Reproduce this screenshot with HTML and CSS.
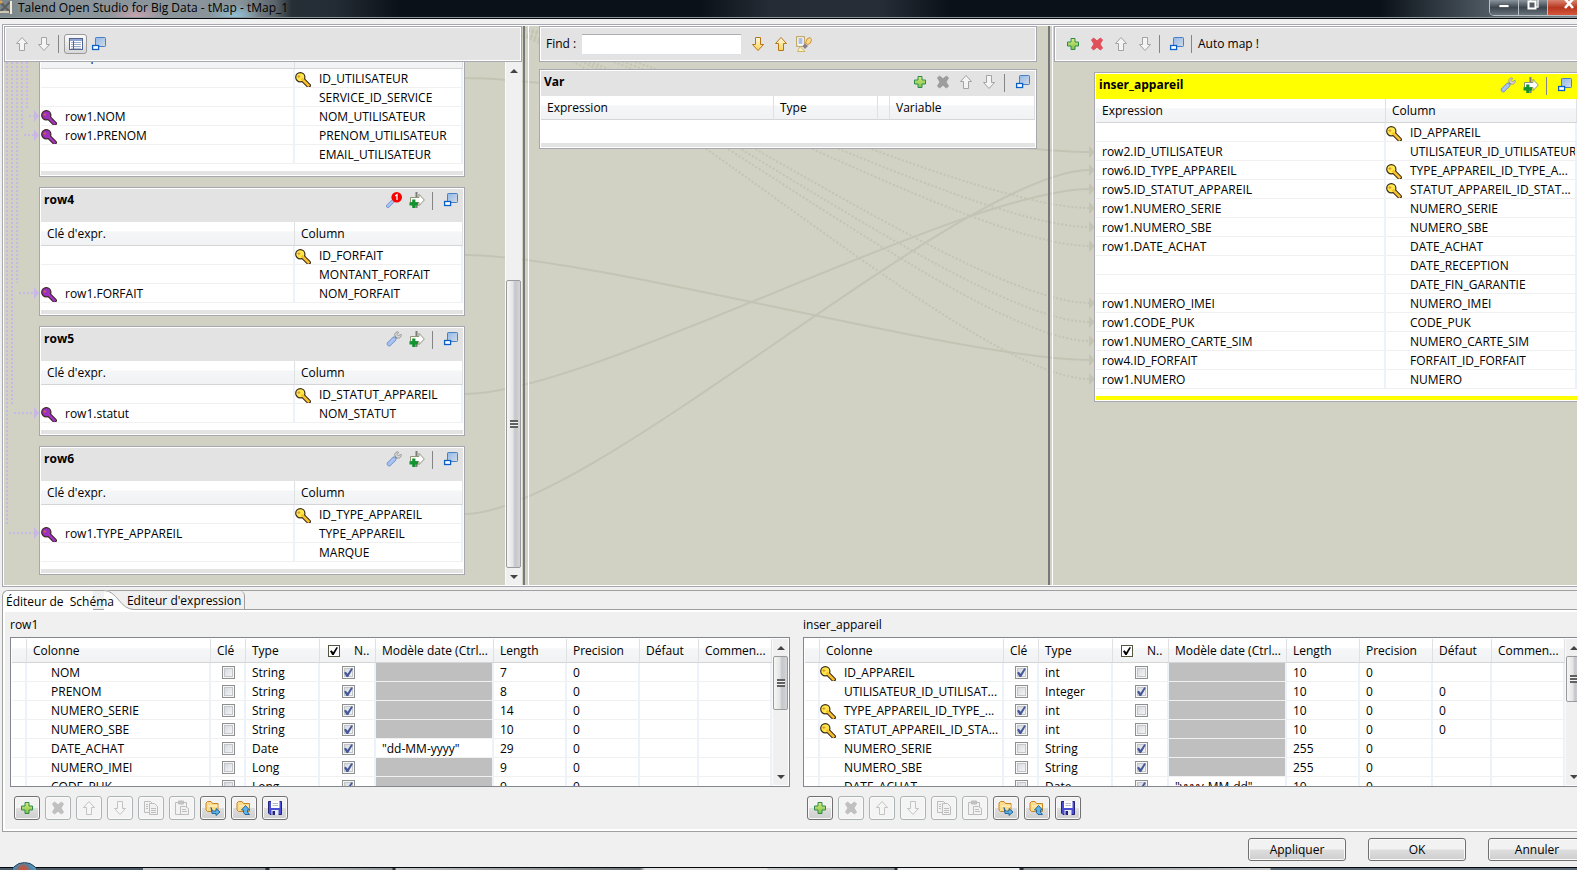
FILE: index.html
```html
<!DOCTYPE html>
<html lang="fr">
<head>
<meta charset="utf-8">
<title>Talend Open Studio for Big Data - tMap - tMap_1</title>
<link rel="stylesheet" href="styles.css">
</head>
<body>
<svg class="defs" aria-hidden="true">
  <defs>
    <linearGradient id="g-win" x1="0" y1="0" x2="1" y2="1"><stop offset="0" stop-color="#8fb8ea"/><stop offset="1" stop-color="#d4dbe4"/></linearGradient>
    <linearGradient id="g-plus" x1="0" y1="0" x2="0" y2="1"><stop offset="0" stop-color="#d9ec7a"/><stop offset="1" stop-color="#7cc04a"/></linearGradient>
    <linearGradient id="g-gold" x1="0" y1="0" x2="0" y2="1"><stop offset="0" stop-color="#fffbe0"/><stop offset="1" stop-color="#fbd35a"/></linearGradient>
  </defs>
  <symbol id="key" viewBox="0 0 16 16">
    <path d="M8 8 13.500 13.500" stroke="#3a2a1c" stroke-width="4.600" stroke-linecap="square"/>
    <circle cx="5.300" cy="5.200" r="4.600" fill="currentColor" stroke="#3a2a1c" stroke-width="1.200"/>
    <path class="key-shaft" d="M7.500 7.500 13.300 13.300" stroke-width="2.600" stroke-linecap="square"/>
    <path d="M2.400 4.600h3M3.900 3.100v3" stroke="#d9722a" stroke-width="1" opacity=".75"/>
  </symbol>
  <symbol id="wrench" viewBox="0 0 16 16">
    <path d="M8 8.200 11 5" stroke="#8e8e8e" stroke-width="3"/>
    <path d="M11.300.8C9.200 1.200 8.400 3 9 5.200L11 7c2 .6 4-.3 4.400-2.800L14.600 3 12.600 5 11 3.400 12.800 1.400Z" fill="#d6d6d6" stroke="#8a8a8a" stroke-width=".8"/>
    <path d="M3.200 12.900 8 8.100" stroke="#6f90cf" stroke-width="4.800" stroke-linecap="round"/>
    <path d="M3.200 12.900 8 8.100" stroke="#a9c3f2" stroke-width="3.200" stroke-linecap="round"/>
  </symbol>
  <symbol id="wrench-on" viewBox="0 0 16 16">
    <path d="M2 14 8 8" stroke="#6f90cf" stroke-width="3.800" stroke-linecap="round"/>
    <path d="M2 14 8 8" stroke="#a9c3f2" stroke-width="2.400" stroke-linecap="round"/>
    <circle cx="10.700" cy="5.300" r="5.300" fill="#f80000"/>
    <path d="M9.300 3.900 11 2.800V8" fill="none" stroke="#fff" stroke-width="1.300"/>
  </symbol>
  <symbol id="export" viewBox="0 0 16 16">
    <path d="M7.500 0V16" stroke="#7c7c7c" stroke-width="2"/>
    <path d="M1.500 5.500H10V2.300L15.300 8 10 13.700V10.500H1.500Z" fill="#fff" stroke="#8f9678" stroke-width="1"/>
    <path d="M4.800 7.500v8.500M.500 11.800H9" stroke="#12932f" stroke-width="3.200"/>
  </symbol>
  <symbol id="win" viewBox="0 0 16 16">
    <rect x="4.500" y="1.500" width="10" height="9" rx=".8" fill="url(#g-win)" stroke="#4a80bf"/>
    <rect x="1.600" y="9.500" width="6" height="4" fill="#fff" stroke="#0c5fc6" stroke-width="1.300"/>
  </symbol>
  <symbol id="up" viewBox="0 0 16 16"><path d="M8 1.500 13.500 7.500H10.500V14.500H5.500V7.500H2.500Z" stroke-linejoin="round"/></symbol>
  <symbol id="down" viewBox="0 0 16 16"><path d="M8 14.500 13.500 8.500H10.500V1.500H5.500V8.500H2.500Z" stroke-linejoin="round"/></symbol>
  <symbol id="plus" viewBox="0 0 16 16"><path d="M6 2.500h4V6h3.500v4H10v3.500H6V10H2.500V6H6Z" fill="url(#g-plus)" stroke="#2f8a4e"/></symbol>
  <symbol id="cross" viewBox="0 0 16 16"><path d="M2.500 4 4.500 2 8 4.800 11.500 2 13.500 4 11 8l2.500 4-2 2L8 11.200 4.500 14l-2-2L5 8Z" fill="currentColor" stroke="currentColor"/></symbol>
  <symbol id="list" viewBox="0 0 16 16">
    <rect x="1.500" y="2.500" width="13" height="11" fill="#fff" stroke="#53658f"/>
    <path d="M2 4h12" stroke="#8fa5d6" stroke-width="2"/><path d="M3 6.500h10M3 8.500h10M3 10.500h10M3 12.300h10" stroke="#9fadc8"/><path d="M5.500 5v8" stroke="#53658f"/>
  </symbol>
  <symbol id="highlight" viewBox="0 0 16 16">
    <rect x=".700" y=".700" width="7.600" height="9.600" fill="#fff" stroke="#b79a4e"/>
    <path d="M2.500 3h4M2.500 5h4M2.500 7h4" stroke="#5d7fc0"/>
    <path d="M9 7.500 12 10 9 13 6.500 10Z" fill="#8a7f88"/>
    <path d="M9.500 7 11 3 14 1.500 15.600 3.500 14.500 7 11.800 8.500Z" fill="#ffd98a" stroke="#c88928" stroke-width=".9"/>
    <path d="M1.500 15.500 4 10.500 9 15.500Z" fill="#fbf3b8" stroke="#c8a850" stroke-width=".8"/>
  </symbol>
  <symbol id="copy" viewBox="0 0 16 16" fill="#f2f2f2" stroke="#bdbdbd">
    <path d="M1.500 1.500h6l2 2v9h-8Z"/><path d="M6.500 3.500h5l3 3v8h-8Z"/><path d="M8 8.500h5M8 10.500h5M8 12.500h5M3 4.500h2M3 6.500h2M3 8.500h2"/>
  </symbol>
  <symbol id="paste" viewBox="0 0 16 16" fill="#f2f2f2" stroke="#bdbdbd">
    <path d="M1.500 2.500h11v12h-11Z"/><path d="M4.500 1h5v3h-5Z" fill="#c4c4c4"/><path d="M6.500 6.500h5l3 2v6h-8Z"/><path d="M8 9.500h4M8 11.500h5"/>
  </symbol>
  <symbol id="folder-out" viewBox="0 0 16 16">
    <path d="M1 3 2.500 1.500H6L7.500 3.500H13V11.500H2.500L1 10Z" fill="#fbdc8c" stroke="#c98524"/><path d="M3 6h10" stroke="#fff3cf"/>
    <path d="M6 7.500 7.500 11H11V8.500L15 12 11 15.500V13.500H7Z" fill="#5fb2e6" stroke="#1b5d94" stroke-width=".9"/>
  </symbol>
  <symbol id="folder-in" viewBox="0 0 16 16">
    <path d="M1 3 2.500 1.500H6L7.500 3.500H13.500V11.500H2.500L1 10Z" fill="#fbdc8c" stroke="#c98524"/><path d="M3 6h10" stroke="#fff3cf"/>
    <path d="M9.500 5.500 13.500 10H11.500V12L13.500 14.500H9L7.500 12.500V10H5.500Z" fill="#5fb2e6" stroke="#1b5d94" stroke-width=".9"/>
  </symbol>
  <symbol id="save" viewBox="0 0 16 16">
    <path d="M1.500 1.500H14.500V14.500H3L1.500 13Z" fill="#4a4fd0" stroke="#23237e"/><path d="M4 1h8.500v7H4Z" fill="#fff"/><path d="M5.500 3.500H11M5.500 5.500H11" stroke="#b9b9cc"/><path d="M4.500 10h7v5h-7Z" fill="#e8e8f4"/><path d="M5.500 11h2.500v4H5.500Z" fill="#23237e"/>
  </symbol>
</svg>

<header class="titlebar">
  <svg class="app-icon" viewBox="0 0 14 16"><path d="M0 2 10 12M10 2 0 12" stroke="#5d5f60" stroke-width="2.400"/><path d="M11 1v13" stroke="#f2ead6" stroke-width="2"/><path d="M0 12h9" stroke="#cfc7b4" stroke-width="2"/><circle cx="1" cy="2" r="1.500" fill="#e0a050"/></svg>
  <h1 class="title">Talend Open Studio for Big Data - tMap - tMap_1</h1>
  <div class="win-controls">
    <button class="win-btn" aria-label="Réduire"><svg viewBox="0 0 16 12"><rect x="3" y="4.500" width="10" height="3" fill="#fff" stroke="#444a52" stroke-width=".8"/></svg></button>
    <button class="win-btn" aria-label="Restaurer"><svg viewBox="0 0 16 12"><path d="M5.500-1H13V7H5.500Z" fill="none" stroke="#e8e8e8" stroke-width="1.500"/><rect x="3.500" y="1.500" width="7" height="7" fill="#555c66" stroke="#fff" stroke-width="2"/></svg></button>
    <button class="win-btn close" aria-label="Fermer"><svg viewBox="0 0 16 12"><path d="M4-1 12 8M12-1 4 8" stroke="#fff" stroke-width="2.600"/></svg></button>
  </div>
</header>

<main class="window">
  <section class="map">
    <svg class="links" viewBox="4 26 1586 559" preserveAspectRatio="none" fill="none" aria-hidden="true">
      <g stroke="#c3c4b3" stroke-width="2">
        <path d="M465 78C590 78 964 152 1090 152"/>
        <path d="M465 255C590 255 964 360 1090 360"/>
        <path d="M465 394C590 394 964 189 1090 189"/>
        <path d="M465 514C590 514 964 170 1090 170"/>
        <g stroke-dasharray="2 2">
          <path d="M465 20C590 20 964 208 1090 208"/><path d="M465 20C590 20 964 227 1090 227"/><path d="M465 20C590 20 964 246 1090 246"/>
          <path d="M465 20C590 20 964 303 1090 303"/><path d="M465 20C590 20 964 322 1090 322"/><path d="M465 20C590 20 964 341 1090 341"/><path d="M465 20C590 20 964 379 1090 379"/>
        </g>
      </g>
      <path fill="#c3c4b3" d="M1089 146l6 6-6 6zM1089 164l6 6-6 6zM1089 183l6 6-6 6zM1089 202l6 6-6 6zM1089 221l6 6-6 6zM1089 240l6 6-6 6zM1089 297l6 6-6 6zM1089 316l6 6-6 6zM1089 335l6 6-6 6zM1089 354l6 6-6 6zM1089 373l6 6-6 6z"/>
      <g stroke="#c8b8e6" stroke-width="2" stroke-dasharray="2 2">
        <path d="M7 62V524M9 533H34M12 62V404M14 413H34M17 62V283M19 293H34M22 62V128M24 135H34M27 62V108M29 116H34"/>
      </g>
      <path fill="#c8b8e6" d="M34 110l5 6-5 6zM34 129l5 6-5 6zM34 287l5 6-5 6zM34 407l5 6-5 6zM34 527l5 6-5 6z"/>
    </svg>

    <div class="pane">
      <div class="toolbar inputs-bar">
        <button class="tool" disabled aria-label="Monter"><svg class="ic off"><use href="#up"/></svg></button>
        <button class="tool" disabled aria-label="Descendre"><svg class="ic off"><use href="#down"/></svg></button>
        <span class="sep"></span>
        <button class="tool pressed" aria-label="Propriétés"><svg class="ic"><use href="#list"/></svg></button>
        <button class="tool" aria-label="Réduire les tables"><svg class="ic"><use href="#win"/></svg></button>
      </div>
      <div class="inputs">
        <div class="stack">
          <article class="panel">
            <table class="grid in-grid"><colgroup><col class="c-expr"><col></colgroup>
              <thead><tr><th>Clé d'expr.</th><th>Column</th></tr></thead>
              <tbody>
                <tr><td></td><td><svg class="key"><use href="#key"/></svg>ID_UTILISATEUR</td></tr>
                <tr><td></td><td>SERVICE_ID_SERVICE</td></tr>
                <tr><td><svg class="key join"><use href="#key"/></svg>row1.NOM</td><td>NOM_UTILISATEUR</td></tr>
                <tr><td><svg class="key join"><use href="#key"/></svg>row1.PRENOM</td><td>PRENOM_UTILISATEUR</td></tr>
                <tr><td></td><td>EMAIL_UTILISATEUR</td></tr>
              </tbody></table>
            <div class="grip"></div>
          </article>
          <article class="panel">
            <header class="panel-head tall"><h2>row4</h2>
              <button class="tool" aria-label="Paramètres"><svg class="ic"><use href="#wrench-on"/></svg></button><button class="tool" aria-label="Filtre"><svg class="ic"><use href="#export"/></svg></button><span class="sep"></span><button class="tool last" aria-label="Réduire"><svg class="ic"><use href="#win"/></svg></button></header>
            <table class="grid in-grid"><colgroup><col class="c-expr"><col></colgroup>
              <thead><tr><th>Clé d'expr.</th><th>Column</th></tr></thead>
              <tbody>
                <tr><td></td><td><svg class="key"><use href="#key"/></svg>ID_FORFAIT</td></tr>
                <tr><td></td><td>MONTANT_FORFAIT</td></tr>
                <tr><td><svg class="key join"><use href="#key"/></svg>row1.FORFAIT</td><td>NOM_FORFAIT</td></tr>
              </tbody></table>
            <div class="grip"></div>
          </article>
          <article class="panel">
            <header class="panel-head tall"><h2>row5</h2>
              <button class="tool" aria-label="Paramètres"><svg class="ic"><use href="#wrench"/></svg></button><button class="tool" aria-label="Filtre"><svg class="ic"><use href="#export"/></svg></button><span class="sep"></span><button class="tool last" aria-label="Réduire"><svg class="ic"><use href="#win"/></svg></button></header>
            <table class="grid in-grid"><colgroup><col class="c-expr"><col></colgroup>
              <thead><tr><th>Clé d'expr.</th><th>Column</th></tr></thead>
              <tbody>
                <tr><td></td><td><svg class="key"><use href="#key"/></svg>ID_STATUT_APPAREIL</td></tr>
                <tr><td><svg class="key join"><use href="#key"/></svg>row1.statut</td><td>NOM_STATUT</td></tr>
              </tbody></table>
            <div class="grip"></div>
          </article>
          <article class="panel">
            <header class="panel-head tall"><h2>row6</h2>
              <button class="tool" aria-label="Paramètres"><svg class="ic"><use href="#wrench"/></svg></button><button class="tool" aria-label="Filtre"><svg class="ic"><use href="#export"/></svg></button><span class="sep"></span><button class="tool last" aria-label="Réduire"><svg class="ic"><use href="#win"/></svg></button></header>
            <table class="grid in-grid"><colgroup><col class="c-expr"><col></colgroup>
              <thead><tr><th>Clé d'expr.</th><th>Column</th></tr></thead>
              <tbody>
                <tr><td></td><td><svg class="key"><use href="#key"/></svg>ID_TYPE_APPAREIL</td></tr>
                <tr><td><svg class="key join"><use href="#key"/></svg>row1.TYPE_APPAREIL</td><td>TYPE_APPAREIL</td></tr>
                <tr><td></td><td>MARQUE</td></tr>
              </tbody></table>
            <div class="grip"></div>
          </article>
        </div>
        <div class="scrollbar wide"><i class="arr up"></i><div class="track t-inputs"><div class="thumb"><i class="ridges"></i></div></div><i class="arr down"></i></div>
      </div>
    </div>
    <div class="sash"></div>

    <div class="pane middle">
      <div class="toolbar find-bar">
        <label for="find">Find :</label><input id="find" class="find" type="text">
        <button class="tool" aria-label="Suivant"><svg class="ic gold"><use href="#down"/></svg></button>
        <button class="tool" aria-label="Précédent"><svg class="ic gold"><use href="#up"/></svg></button>
        <button class="tool" aria-label="Tout surligner"><svg class="ic"><use href="#highlight"/></svg></button>
      </div>
      <article class="panel var">
        <header class="panel-head"><h2>Var</h2>
          <button class="tool" aria-label="Ajouter"><svg class="ic"><use href="#plus"/></svg></button><button class="tool" disabled aria-label="Supprimer"><svg class="ic grey"><use href="#cross"/></svg></button><button class="tool" disabled aria-label="Monter"><svg class="ic off"><use href="#up"/></svg></button><button class="tool" disabled aria-label="Descendre"><svg class="ic off"><use href="#down"/></svg></button><span class="sep"></span><button class="tool last" aria-label="Réduire"><svg class="ic"><use href="#win"/></svg></button></header>
        <table class="grid var-grid"><colgroup><col class="c-vexpr"><col class="c-vtype"><col class="c-vgap"><col></colgroup>
          <thead><tr><th>Expression</th><th>Type</th><th></th><th>Variable</th></tr></thead></table>
        <div class="grip var-grip"></div>
      </article>
    </div>
    <div class="sash"></div>

    <div class="pane right">
      <div class="toolbar out-bar">
        <button class="tool" aria-label="Ajouter une sortie"><svg class="ic"><use href="#plus"/></svg></button>
        <button class="tool" aria-label="Supprimer la sortie"><svg class="ic red"><use href="#cross"/></svg></button>
        <button class="tool" disabled aria-label="Monter"><svg class="ic off"><use href="#up"/></svg></button>
        <button class="tool" disabled aria-label="Descendre"><svg class="ic off"><use href="#down"/></svg></button>
        <span class="sep"></span>
        <button class="tool" aria-label="Réduire les tables"><svg class="ic"><use href="#win"/></svg></button>
        <span class="sep"></span>
        <button class="tool text-tool">Auto map !</button>
      </div>
      <article class="panel out">
        <header class="panel-head"><h2>inser_appareil</h2>
          <button class="tool" aria-label="Paramètres"><svg class="ic"><use href="#wrench"/></svg></button><button class="tool" aria-label="Filtre"><svg class="ic"><use href="#export"/></svg></button><span class="sep"></span><button class="tool last" aria-label="Réduire"><svg class="ic"><use href="#win"/></svg></button></header>
        <table class="grid out-grid"><colgroup><col class="c-oexpr"><col></colgroup>
          <thead><tr><th>Expression</th><th>Column</th></tr></thead>
          <tbody>
            <tr><td></td><td><svg class="key"><use href="#key"/></svg>ID_APPAREIL</td></tr>
            <tr><td>row2.ID_UTILISATEUR</td><td>UTILISATEUR_ID_UTILISATEUR</td></tr>
            <tr><td>row6.ID_TYPE_APPAREIL</td><td><svg class="key"><use href="#key"/></svg>TYPE_APPAREIL_ID_TYPE_A...</td></tr>
            <tr><td>row5.ID_STATUT_APPAREIL</td><td><svg class="key"><use href="#key"/></svg>STATUT_APPAREIL_ID_STAT...</td></tr>
            <tr><td>row1.NUMERO_SERIE</td><td>NUMERO_SERIE</td></tr>
            <tr><td>row1.NUMERO_SBE</td><td>NUMERO_SBE</td></tr>
            <tr><td>row1.DATE_ACHAT</td><td>DATE_ACHAT</td></tr>
            <tr><td></td><td>DATE_RECEPTION</td></tr>
            <tr><td></td><td>DATE_FIN_GARANTIE</td></tr>
            <tr><td>row1.NUMERO_IMEI</td><td>NUMERO_IMEI</td></tr>
            <tr><td>row1.CODE_PUK</td><td>CODE_PUK</td></tr>
            <tr><td>row1.NUMERO_CARTE_SIM</td><td>NUMERO_CARTE_SIM</td></tr>
            <tr><td>row4.ID_FORFAIT</td><td>FORFAIT_ID_FORFAIT</td></tr>
            <tr><td>row1.NUMERO</td><td>NUMERO</td></tr>
          </tbody></table>
        <div class="grip"></div>
      </article>
    </div>
  </section>

  <section class="editor">
    <nav class="tabs">
      <button class="tab active">Éditeur de&nbsp; Schéma</button>
      <svg class="swoosh" viewBox="0 0 30 20" aria-hidden="true"><path d="M0 0C13 0 16 19.500 30 19.500V20H0Z" fill="#fff"/><path d="M0 .5C13 .5 16 19.500 30 19.500" fill="none" stroke="#a0a0a0"/></svg>
      <button class="tab">Editeur d'expression</button>
    </nav>
    <div class="tab-body">
      <div class="schema">
        <h3>row1</h3>
        <div class="schema-box">
          <table class="grid schema-grid">
            <colgroup><col class="s0"><col class="s1"><col class="s2"><col class="s3"><col class="s4"><col class="s5"><col class="s6"><col class="s6"><col class="s8"><col></colgroup>
            <thead><tr><th></th><th>Colonne</th><th class="k">Clé</th><th>Type</th><th class="nul"><input class="box" type="checkbox" checked aria-label="Tout nullable"><span>N..</span></th><th>Modèle date (Ctrl...</th><th>Length</th><th>Precision</th><th>Défaut</th><th>Commen...</th></tr></thead>
            <tbody>
              <tr><td></td><td>NOM</td><td><input class="chk" type="checkbox" aria-label="Clé NOM"></td><td>String</td><td><input class="chk" type="checkbox" checked aria-label="Nullable NOM"></td><td class="na"></td><td>7</td><td>0</td><td></td><td></td></tr>
              <tr><td></td><td>PRENOM</td><td><input class="chk" type="checkbox" aria-label="Clé PRENOM"></td><td>String</td><td><input class="chk" type="checkbox" checked aria-label="Nullable PRENOM"></td><td class="na"></td><td>8</td><td>0</td><td></td><td></td></tr>
              <tr><td></td><td>NUMERO_SERIE</td><td><input class="chk" type="checkbox" aria-label="Clé NUMERO_SERIE"></td><td>String</td><td><input class="chk" type="checkbox" checked aria-label="Nullable NUMERO_SERIE"></td><td class="na"></td><td>14</td><td>0</td><td></td><td></td></tr>
              <tr><td></td><td>NUMERO_SBE</td><td><input class="chk" type="checkbox" aria-label="Clé NUMERO_SBE"></td><td>String</td><td><input class="chk" type="checkbox" checked aria-label="Nullable NUMERO_SBE"></td><td class="na"></td><td>10</td><td>0</td><td></td><td></td></tr>
              <tr><td></td><td>DATE_ACHAT</td><td><input class="chk" type="checkbox" aria-label="Clé DATE_ACHAT"></td><td>Date</td><td><input class="chk" type="checkbox" checked aria-label="Nullable DATE_ACHAT"></td><td>"dd-MM-yyyy"</td><td>29</td><td>0</td><td></td><td></td></tr>
              <tr><td></td><td>NUMERO_IMEI</td><td><input class="chk" type="checkbox" aria-label="Clé NUMERO_IMEI"></td><td>Long</td><td><input class="chk" type="checkbox" checked aria-label="Nullable NUMERO_IMEI"></td><td class="na"></td><td>9</td><td>0</td><td></td><td></td></tr>
              <tr><td></td><td>CODE_PUK</td><td><input class="chk" type="checkbox" aria-label="Clé CODE_PUK"></td><td>Long</td><td><input class="chk" type="checkbox" checked aria-label="Nullable CODE_PUK"></td><td class="na"></td><td>9</td><td>0</td><td></td><td></td></tr>
            </tbody>
          </table>
          <div class="scrollbar"><i class="arr up"></i><div class="track"><div class="thumb t-left"><i class="ridges"></i></div></div><i class="arr down"></i></div>
        </div>
        <div class="actions">
          <button class="act" aria-label="Ajouter"><svg class="ic"><use href="#plus"/></svg></button>
          <button class="act" disabled aria-label="Supprimer"><svg class="ic pale"><use href="#cross"/></svg></button>
          <button class="act" disabled aria-label="Monter"><svg class="ic faint"><use href="#up"/></svg></button>
          <button class="act" disabled aria-label="Descendre"><svg class="ic faint"><use href="#down"/></svg></button>
          <button class="act" disabled aria-label="Copier"><svg class="ic"><use href="#copy"/></svg></button>
          <button class="act" disabled aria-label="Coller"><svg class="ic"><use href="#paste"/></svg></button>
          <button class="act" aria-label="Importer"><svg class="ic"><use href="#folder-out"/></svg></button>
          <button class="act" aria-label="Exporter"><svg class="ic"><use href="#folder-in"/></svg></button>
          <button class="act" aria-label="Enregistrer"><svg class="ic"><use href="#save"/></svg></button>
        </div>
      </div>
      <div class="schema">
        <h3>inser_appareil</h3>
        <div class="schema-box">
          <table class="grid schema-grid">
            <colgroup><col class="s0"><col class="s1"><col class="s2"><col class="s3"><col class="s4"><col class="s5"><col class="s6"><col class="s6"><col class="s8"><col></colgroup>
            <thead><tr><th></th><th>Colonne</th><th class="k">Clé</th><th>Type</th><th class="nul"><input class="box" type="checkbox" checked aria-label="Tout nullable"><span>N..</span></th><th>Modèle date (Ctrl...</th><th>Length</th><th>Precision</th><th>Défaut</th><th>Commen...</th></tr></thead>
            <tbody>
              <tr><td></td><td><svg class="key"><use href="#key"/></svg>ID_APPAREIL</td><td><input class="chk" type="checkbox" checked aria-label="Clé ID_APPAREIL"></td><td>int</td><td><input class="chk" type="checkbox" aria-label="Nullable ID_APPAREIL"></td><td class="na"></td><td>10</td><td>0</td><td></td><td></td></tr>
              <tr><td></td><td>UTILISATEUR_ID_UTILISAT...</td><td><input class="chk" type="checkbox" aria-label="Clé UTILISATEUR"></td><td>Integer</td><td><input class="chk" type="checkbox" checked aria-label="Nullable UTILISATEUR"></td><td class="na"></td><td>10</td><td>0</td><td>0</td><td></td></tr>
              <tr><td></td><td><svg class="key"><use href="#key"/></svg>TYPE_APPAREIL_ID_TYPE_...</td><td><input class="chk" type="checkbox" checked aria-label="Clé TYPE_APPAREIL"></td><td>int</td><td><input class="chk" type="checkbox" aria-label="Nullable TYPE_APPAREIL"></td><td class="na"></td><td>10</td><td>0</td><td>0</td><td></td></tr>
              <tr><td></td><td><svg class="key"><use href="#key"/></svg>STATUT_APPAREIL_ID_STA...</td><td><input class="chk" type="checkbox" checked aria-label="Clé STATUT_APPAREIL"></td><td>int</td><td><input class="chk" type="checkbox" aria-label="Nullable STATUT_APPAREIL"></td><td class="na"></td><td>10</td><td>0</td><td>0</td><td></td></tr>
              <tr><td></td><td>NUMERO_SERIE</td><td><input class="chk" type="checkbox" aria-label="Clé NUMERO_SERIE"></td><td>String</td><td><input class="chk" type="checkbox" checked aria-label="Nullable NUMERO_SERIE"></td><td class="na"></td><td>255</td><td>0</td><td></td><td></td></tr>
              <tr><td></td><td>NUMERO_SBE</td><td><input class="chk" type="checkbox" aria-label="Clé NUMERO_SBE"></td><td>String</td><td><input class="chk" type="checkbox" checked aria-label="Nullable NUMERO_SBE"></td><td class="na"></td><td>255</td><td>0</td><td></td><td></td></tr>
              <tr><td></td><td>DATE_ACHAT</td><td><input class="chk" type="checkbox" aria-label="Clé DATE_ACHAT"></td><td>Date</td><td><input class="chk" type="checkbox" checked aria-label="Nullable DATE_ACHAT"></td><td>"yyyy-MM-dd"</td><td>10</td><td>0</td><td></td><td></td></tr>
            </tbody>
          </table>
          <div class="scrollbar"><i class="arr up"></i><div class="track"><div class="thumb t-right"><i class="ridges"></i></div></div><i class="arr down"></i></div>
        </div>
        <div class="actions">
          <button class="act" aria-label="Ajouter"><svg class="ic"><use href="#plus"/></svg></button>
          <button class="act" disabled aria-label="Supprimer"><svg class="ic pale"><use href="#cross"/></svg></button>
          <button class="act" disabled aria-label="Monter"><svg class="ic faint"><use href="#up"/></svg></button>
          <button class="act" disabled aria-label="Descendre"><svg class="ic faint"><use href="#down"/></svg></button>
          <button class="act" disabled aria-label="Copier"><svg class="ic"><use href="#copy"/></svg></button>
          <button class="act" disabled aria-label="Coller"><svg class="ic"><use href="#paste"/></svg></button>
          <button class="act" aria-label="Importer"><svg class="ic"><use href="#folder-out"/></svg></button>
          <button class="act" aria-label="Exporter"><svg class="ic"><use href="#folder-in"/></svg></button>
          <button class="act" aria-label="Enregistrer"><svg class="ic"><use href="#save"/></svg></button>
        </div>
      </div>
    </div>
  </section>

  <footer class="dialog-buttons">
    <button class="push">Appliquer</button>
    <button class="push">OK</button>
    <button class="push">Annuler</button>
  </footer>
</main>
<div class="taskbar"><span class="orb"></span></div>
</body>
</html>
```
FILE: styles.css
```css
* { box-sizing: border-box; }
html, body { height: 100%; }
body {
  margin: 0;
  display: flex;
  flex-direction: column;
  overflow: hidden;
  background: #f0f0f0;
  color: #000;
  font: 12px/16px "Open Sans", "Noto Sans", sans-serif;
}
h1, h2, h3 { margin: 0; font-size: 12px; line-height: 16px; }
button, input { font: inherit; color: inherit; }
.defs { position: absolute; width: 0; height: 0; }

/* Title bar */
.titlebar {
  flex: none;
  height: 19px;
  display: flex;
  align-items: flex-start;
  border-bottom: 1px solid #05080b;
  box-shadow: inset 0 -1px #8d989c;
  background:
    radial-gradient(ellipse 26px 12px at 235px 16px, #8fc0d6, transparent),
    radial-gradient(ellipse 30px 12px at 136px 16px, #c7a3ae, transparent),
    linear-gradient(90deg, #788589 0, #8b959a 60px, #89949a 240px, #5b656b 275px, #262e36 292px, #232b34 335px, #0b1118 400px, #0a1118 700px, #252c35 770px, #262d36 880px, #0a1118 950px, #0a1118 1380px, #4a545d 1480px, #77838c 100%);
}
.app-icon { width: 14px; height: 16px; margin-right: 4px; }
.title { flex: 1; font-weight: 400; }
.win-controls { display: flex; margin-right: -14px; border: 1px solid #b9c0c6; border-top: 0; border-radius: 0 0 5px 5px; overflow: hidden; }
.win-btn { width: 29px; height: 15px; padding: 0; border: 0; border-right: 1px solid #b9c0c6; background: linear-gradient(#8a949d, #3d464f 50%, #68727b); display: flex; justify-content: center; }
.win-btn svg { width: 16px; height: 12px; }
.win-btn.close { width: 42px; border: 0; background: linear-gradient(#d98470, #b8371f 50%, #d3563a); }

/* The dialog runs a little past the right screen edge */
.window { flex: 1; min-height: 0; display: flex; flex-direction: column; margin-right: -13px; padding: 5px 0 0 2px; }

/* Mapping area */
.map {
  flex: 1;
  min-height: 0;
  position: relative;
  display: grid;
  grid-template-columns: 518fr 7px 518fr 6px 537fr;
  grid-template-rows: minmax(0, 1fr);
  border: 1px solid #a7a7af;
  border-right: 0;
  outline: 1px solid #fff;
  outline-offset: -2px;
  padding: 1px 0 1px 1px;
  background: #d1d2c3;
}
.links { position: absolute; left: 1px; top: 1px; width: calc(100% - 1px); height: calc(100% - 2px); }
.pane { position: relative; min-width: 0; min-height: 0; display: flex; flex-direction: column; }
.sash { position: relative; border-left: 2px solid #77777c; border-right: 1px solid #fff; margin-left: 1px; }
.middle { padding: 0 10px; gap: 7px; }

.toolbar {
  flex: none;
  height: 36px;
  display: flex;
  align-items: center;
  border: 1px solid #a7a7af;
  box-shadow: inset 0 0 0 1px #fff;
  background: #e3e3e3;
}
.tool { padding: 0; border: 0; background: none; display: flex; align-items: center; justify-content: center; }
.ic { width: 16px; height: 16px; display: block; }
.off { fill: #f4f4f4; stroke: #a3a3a3; }
.faint { fill: #f6f6f6; stroke: #c3c3c3; }
.gold { fill: url(#g-gold); stroke: #b8741a; }
.grey { color: #9d9d9d; }
.pale { color: #c0c0c0; }
.red { color: #e0505a; }
.sep { width: 1px; height: 18px; background: #858585; }
.inputs-bar { padding-left: 9px; gap: 6px; }
.inputs-bar .pressed { width: 23px; height: 20px; margin-left: -1px; border: 1px solid #9a9a9a; border-radius: 3px; background: linear-gradient(#fafafa, #d8d8d8); }
.inputs-bar .tool:last-child { margin-left: -2px; }
.find-bar { padding-left: 6px; gap: 7px; }
.find { width: 161px; height: 21px; margin: 0 1px 0 -2px; padding: 0 4px; border: 1px solid #dde3ea; border-top-color: #abadb3; border-radius: 2px; background: #fff; }
.out-bar { margin-left: 1px; padding-left: 10px; gap: 8px; }
.out-bar .sep { margin-left: -2px; }
.out-bar .sep + .tool { margin-left: 1px; }
.out-bar .sep + .text-tool { margin-left: -2px; }

.inputs { flex: 1; min-height: 0; display: flex; }
.stack { flex: 1; min-width: 0; overflow: hidden; display: flex; flex-direction: column; justify-content: flex-end; gap: 10px; padding: 0 40px 10px 35px; }
.panel { flex: none; border: 1px solid #a7a7af; padding: 1px; background: #fff; }
.panel-head { display: flex; align-items: flex-start; gap: 7px; height: 25px; padding: 3px 4px 0 3px; background: #e3e3e3; }
.panel-head.tall { height: 33px; }
.panel-head h2 { flex: 1; }
.panel-head .last { margin-left: 3px; }
.grip { height: 11px; border-top: 7px solid #fff; background: #e3e3e3; }
.var-grip { height: 27px; border-top-width: 23px; }
.out { margin: 10px 11px 0 41px; }
.out .panel-head, .out .grip { background-color: #ff0; }

/* Data grids */
.grid { width: 100%; border-collapse: separate; border-spacing: 0; table-layout: fixed; background: #fff; }
.grid th {
  height: 24px;
  padding: 0 0 0 6px;
  font-weight: 400;
  text-align: left;
  white-space: nowrap;
  overflow: hidden;
  border-right: 1px solid #dfe0e2;
  border-bottom: 1px solid #d5d5d5;
  background: linear-gradient(#fff 0 40%, #f5f6f7 42%, #f1f2f4);
}
.grid td {
  height: 19px;
  padding: 2px 0 0 6px;
  line-height: 16px;
  white-space: nowrap;
  overflow: hidden;
  border-right: 2px solid #edf1f9;
  border-bottom: 1px solid #f0f0f0;
}
.key { --shaft: #f7c02c; width: 16px; height: 16px; margin: -1px 8px -1px -24px; vertical-align: -4px; color: #ffe94a; }
.key.join { --shaft: #a233c0; color: #9a2fc4; }
.key-shaft { stroke: var(--shaft); }
.c-expr { width: 254px; }
.in-grid td { padding-left: 24px; }
.c-vexpr { width: 233px; }
.c-vtype { width: 104px; }
.c-vgap { width: 12px; }
.c-oexpr { width: 290px; }
.out-grid td:last-child { padding-left: 24px; }

/* Scroll bars */
.scrollbar { flex: none; width: 16px; display: flex; flex-direction: column; align-items: center; background: #f0f0f0; border-left: 1px solid #fafafa; }
.scrollbar.wide { width: 17px; padding-right: 1px; }
.arr { flex: none; width: 0; height: 0; margin: 7px 0 6px; border: 4px solid transparent; }
.arr.up { border-top: 0; border-bottom-color: #444; }
.arr.down { border-bottom: 0; border-top-color: #444; }
.track { flex: 1; width: 15px; display: flex; flex-direction: column; }
.thumb { display: flex; align-items: center; justify-content: center; border: 1px solid #9a9a9a; border-radius: 2px; background: linear-gradient(90deg, #f6f6f6, #e4e4e6 45%, #c4c6c9 60%, #d4d5d8); }
.ridges { width: 8px; height: 8px; background: repeating-linear-gradient(#606060 0 2px, #f4f4f4 2px 3px); }
.t-inputs { justify-content: flex-end; }
.t-inputs .thumb { height: 59%; }
.t-left { height: 54px; }
.t-right { height: 46px; }

/* Schema editor */
.editor { flex: none; margin-top: 3px; border: 1px solid #a0a0a0; border-right: 0; border-radius: 6px 0 0 0; background: #fff; }
.tabs { display: flex; height: 19px; border-bottom: 1px solid #a0a0a0; border-radius: 6px 0 0 0; background: #f0f0f0; }
.tab { position: relative; padding: 2px 0 0 3px; border: 0; background: none; line-height: 16px; white-space: nowrap; }
.tab.active { z-index: 1; height: 19px; border-radius: 6px 0 0 0; background: linear-gradient(90deg, #fff 90px, transparent 90px); }
.swoosh { flex: none; width: 30px; height: 20px; margin: -1px -10px 0 -10px; }
.swoosh + .tab { padding-right: 3px; border-right: 1px solid #a0a0a0; border-radius: 0 5px 0 0; }
.tab-body { display: grid; grid-template-columns: 1fr 1fr; gap: 13px; margin: 2px 0 2px 2px; padding: 5px 7px 9px 5px; background: #f0f0f0; }
.schema { min-width: 0; }
.schema h3 { font-weight: 400; height: 20px; }
.schema-box { display: flex; align-items: flex-start; height: 150px; padding: 1px; overflow: hidden; border: 1px solid #828790; background: #fff; }
.schema-box .scrollbar { align-self: stretch; }
.schema-grid { flex: 1; min-width: 0; }
.schema-grid td:nth-child(2) { padding-left: 24px; }
.schema-grid td:nth-child(3) { padding-left: 11px; }
.schema-grid td:nth-child(5) { padding-left: 22px; }
.schema-grid td.na { background: #bfbfbf; }
.schema-grid .k { padding-left: 6px; }
.schema-grid .nul { padding-left: 8px; }
.nul span { margin-left: 14px; }
.s0 { width: 15px; }
.s1 { width: 184px; }
.s2 { width: 35px; }
.s3 { width: 74px; }
.s4 { width: 56px; }
.s5 { width: 118px; }
.s6 { width: 73px; }
.s8 { width: 59px; }
.chk, .box { appearance: none; display: inline-block; margin: 0; vertical-align: middle; }
.chk { width: 13px; height: 13px; margin: -1px 0 1px; border: 1px solid #8e8f8f; box-shadow: inset 0 0 0 1px #f6f6f6, inset 0 0 0 2px #c3c7cc; background: linear-gradient(135deg, #cfd3d9, #fbfbfb); }
.box { width: 12px; height: 12px; border: 1px solid #55563f; background: #fff; }
.chk:checked::before, .box:checked::before { content: ""; display: block; width: 9px; height: 9px; margin: 1px; background: #46589a; clip-path: polygon(0 50%, 20% 38%, 40% 62%, 80% 0, 100% 4%, 45% 100%, 30% 100%); }
.box:checked::before { width: 8px; height: 8px; background: #000; }
.actions { display: flex; gap: 5px; padding: 9px 0 0 4px; }
.act { width: 26px; height: 24px; padding: 0; display: flex; align-items: center; justify-content: center; border: 1px solid #707070; border-radius: 3px; box-shadow: inset 0 0 0 1px #fafafa; background: linear-gradient(#f2f2f2 0 48%, #dddddd 52%, #cfcfcf); }
.act:disabled { border-color: #adb2b5; background: #f4f4f4; }

.dialog-buttons { flex: none; display: flex; justify-content: flex-end; gap: 22px; padding: 6px 4px 6px 0; }
.push { width: 98px; height: 23px; padding: 0; border: 1px solid #707070; border-radius: 3px; box-shadow: inset 0 0 0 1px #fafafa; background: linear-gradient(#f2f2f2 0 48%, #dddddd 52%, #cfcfcf); }

.taskbar { position: relative; flex: none; height: 3px; border-top: 1px solid #05080b; background: linear-gradient(90deg, #4b5967 0 143px, #c4c6c6 143px, #8d9397 265px, #2a3036 266px 269px, #c4c6c6 270px, #8d9397 392px, #2a3036 393px 395px, #c4c6c6 396px, #6d7377 640px, #e0e0e0 645px 767px, #c4c6c6 768px, #8d9397 894px, #2a3036 895px 897px, #ececec 898px 1019px, #2a3036 1020px 1023px, #8d9397 1024px, #c4c6c6 1270px, #5a6876 1271px); }
.orb { position: absolute; left: 9px; top: -6px; width: 31px; height: 31px; border-radius: 50%; border: 1px solid #20455f; background: radial-gradient(circle at 45% 26%, #c0563a 0 3px, #4f87ab 8px, #a8c8dc); }
```
